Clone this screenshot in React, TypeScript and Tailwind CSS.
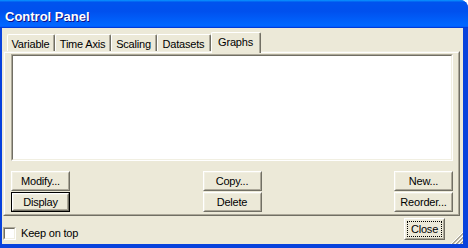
type BtnProps = {
  label: string;
  isDefault?: boolean;
  focus?: boolean;
  className?: string;
};

const Btn = ({ label, isDefault, focus, className = "w-[59px] h-[20px]" }: BtnProps) => {
  const face = (
    <div className="flex-1 flex border border-t-white border-l-white border-r-[#716f64] border-b-[#716f64]">
      <div className="flex-1 flex border border-t-[#f1efe2] border-l-[#f1efe2] border-r-[#aca899] border-b-[#aca899] p-[1px]">
        <div
          className={`flex-1 flex items-center justify-center leading-[13px] ${
            focus ? "border border-dotted border-black" : ""
          }`}
        >
          {label}
        </div>
      </div>
    </div>
  );
  return (
    <div className={`${className} flex bg-[#ece9d8] ${isDefault ? "border border-black" : ""}`}>
      {face}
    </div>
  );
};

const tabs = [
  { label: "Variable", w: "w-[48px]" },
  { label: "Time Axis", w: "w-[56px]" },
  { label: "Scaling", w: "w-[46px]" },
  { label: "Datasets", w: "w-[54px]" },
  { label: "Graphs", w: "w-[50px]", active: true },
];

const Grip = () => {
  const px: { x: number; y: number; c: string }[] = [];
  for (let y = 0; y < 12; y++) {
    for (let x = 0; x < 12; x++) {
      const d = 22 - (x + y);
      if ([1, 2, 5, 6, 9, 10].includes(d)) px.push({ x, y, c: "#aca899" });
      if ([3, 7, 11].includes(d)) px.push({ x, y, c: "#ffffff" });
    }
  }
  return (
    <svg width="12" height="12" className="absolute right-0 bottom-0" shapeRendering="crispEdges">
      {px.map((p, i) => (
        <rect key={i} x={p.x} y={p.y} width="1" height="1" fill={p.c} />
      ))}
    </svg>
  );
};

export default function App() {
  return (
    <div className="w-[468px] h-[248px] overflow-hidden font-['Liberation_Sans',Arial,sans-serif] text-[11px] tracking-[-0.2px] text-black">
      <div className="w-[468px] h-[248px] flex flex-col bg-[#0842dc] rounded-tr-[8px] overflow-hidden">
        <div className="h-[28px] shrink-0 pl-[5px] pt-[9px] bg-[linear-gradient(180deg,#0997ff,#0053ee_8%,#0050ee_40%,#0066ff_88%,#0066ff_93%,#005bff_95%,#003dd7_96%,#003dd7)]">
          <span className="block text-[13px] leading-[15px] font-bold tracking-normal text-white [text-shadow:1px_1px_#0f1089]">
            Control Panel
          </span>
        </div>

        <div className="flex-1 flex pl-[2px] pr-[5px] pb-[4px]">
          <div className="flex-1 bg-[#ece9d8] relative flex flex-col pl-[1px] pr-[3px]">
            {/* tab strip */}
            <div className="h-[23px] shrink-0 pt-[4px] pl-[4px] flex items-end relative z-10">
              {tabs.map((t) => (
                <div
                  key={t.label}
                  className={`${t.w} ${
                    t.active ? "h-[21px] -mb-[2px] bg-[#ece9d8]" : "h-[17px]"
                  } flex border-t border-l border-white border-r border-r-[#716f64] rounded-tl-[2px] rounded-tr-[2px]`}
                >
                  <div className="flex-1 border-r border-[#aca899] flex justify-center pt-[3px] leading-[13px]">
                    {t.label}
                  </div>
                </div>
              ))}
            </div>

            {/* tab page */}
            <div className="h-[165px] shrink-0 flex border border-t-[#f1efe2] border-l-[#f1efe2] border-r-[#716f64] border-b-[#716f64]">
              <div className="flex-1 flex flex-col border border-t-white border-l-white border-r-[#aca899] border-b-[#aca899] pl-[6px] pr-[5px] pt-[1px]">
                <div className="h-[107px] flex border border-t-[#aca899] border-l-[#aca899] border-r-white border-b-white">
                  <div className="flex-1 bg-white border border-t-[#716f64] border-l-[#716f64] border-r-[#f1efe2] border-b-[#f1efe2]" />
                </div>
                <div className="mt-[10px] flex justify-between">
                  <div className="flex flex-col gap-[1px]">
                    <Btn label="Modify..." />
                    <Btn label="Display" isDefault />
                  </div>
                  <div className="flex flex-col gap-[1px]">
                    <Btn label="Copy..." />
                    <Btn label="Delete" />
                  </div>
                  <div className="flex flex-col gap-[1px]">
                    <Btn label="New..." />
                    <Btn label="Reorder..." />
                  </div>
                </div>
              </div>
            </div>

            {/* bottom row */}
            <div className="flex-1 flex items-start">
              <label className="mt-[11px] flex items-center gap-[5px]">
                <span className="w-[13px] h-[13px] flex border border-t-[#aca899] border-l-[#aca899] border-r-white border-b-white">
                  <span className="flex-1 bg-white border border-t-[#716f64] border-l-[#716f64] border-r-[#f1efe2] border-b-[#f1efe2]" />
                </span>
                <span className="leading-[13px]">Keep on top</span>
              </label>
              <div className="ml-auto mt-[2px] mr-[15px]">
                <Btn label="Close" focus className="w-[41px] h-[22px]" />
              </div>
            </div>

            <Grip />
          </div>
        </div>
      </div>
    </div>
  );
}
